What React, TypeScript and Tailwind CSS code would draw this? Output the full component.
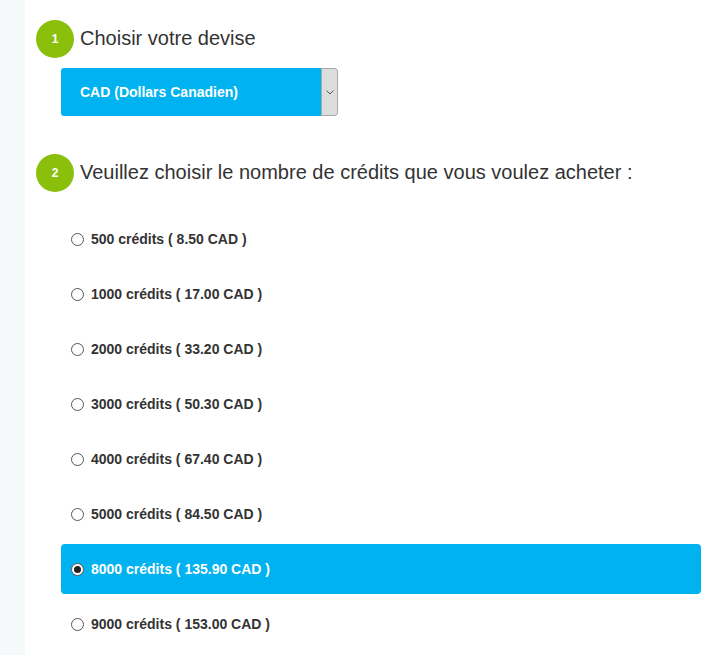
import React, { useState } from "react";

const options = [
  ["500", "8.50"],
  ["1000", "17.00"],
  ["2000", "33.20"],
  ["3000", "50.30"],
  ["4000", "67.40"],
  ["5000", "84.50"],
  ["8000", "135.90"],
  ["9000", "153.00"],
];

function Step({ n, label }: { n: string; label: string }) {
  return (
    <div className="flex items-center h-[38px]">
      <div className="w-[38px] h-[38px] rounded-full bg-[#8abf0c] text-white text-[12px] font-bold flex items-center justify-center">
        {n}
      </div>
      <div className="ml-[6px] pb-[3px] text-[20px] text-[#333] leading-none">{label}</div>
    </div>
  );
}

export default function App() {
  const [sel, setSel] = useState(6);
  return (
    <div className="flex min-h-[655px] bg-white" style={{ fontFamily: '"Liberation Sans", Arial, sans-serif' }}>
      <div className="w-[25px] shrink-0 bg-[#f5f9fa]" />
      <div className="flex-1 pl-[11px] pr-[21px] pt-[20px]">
        <Step n="1" label="Choisir votre devise" />
        <div className="ml-[25px] mt-[10px] w-[277px] h-[48px] flex rounded-[3px] overflow-hidden">
          <div className="flex-1 bg-[#00b3f0] text-white font-bold text-[14px] flex items-center pl-[19px]">
            CAD (Dollars Canadien)
          </div>
          <div className="w-[17px] bg-[#dddddd] border border-[#a9a9a9] rounded-r-[3px] flex items-center justify-center">
            <svg width="8" height="5" viewBox="0 0 8 5" fill="none">
              <path d="M0.5 0.5 L4 4 L7.5 0.5" stroke="#555" strokeWidth="1" />
            </svg>
          </div>
        </div>
        <div className="mt-[38px]">
          <Step n="2" label="Veuillez choisir le nombre de crédits que vous voulez acheter :" />
        </div>
        <div className="ml-[25px] mt-[22px] flex flex-col gap-[5px]">
          {options.map(([c, p], i) => {
            const active = i === sel;
            return (
              <label
                key={c}
                onClick={() => setSel(i)}
                className={`h-[50px] flex items-center pl-[10px] rounded-[4px] cursor-pointer ${
                  active ? "bg-[#00b3f0] text-white" : "text-[#333]"
                }`}
              >
                <span className="w-[13px] h-[13px] rounded-full border border-[#555] bg-white flex items-center justify-center">
                  {active && <span className="w-[7px] h-[7px] rounded-full bg-[#222]" />}
                </span>
                <span className="ml-[7px] font-bold text-[14px]">
                  {c} crédits ( {p} CAD )
                </span>
              </label>
            );
          })}
        </div>
      </div>
    </div>
  );
}
